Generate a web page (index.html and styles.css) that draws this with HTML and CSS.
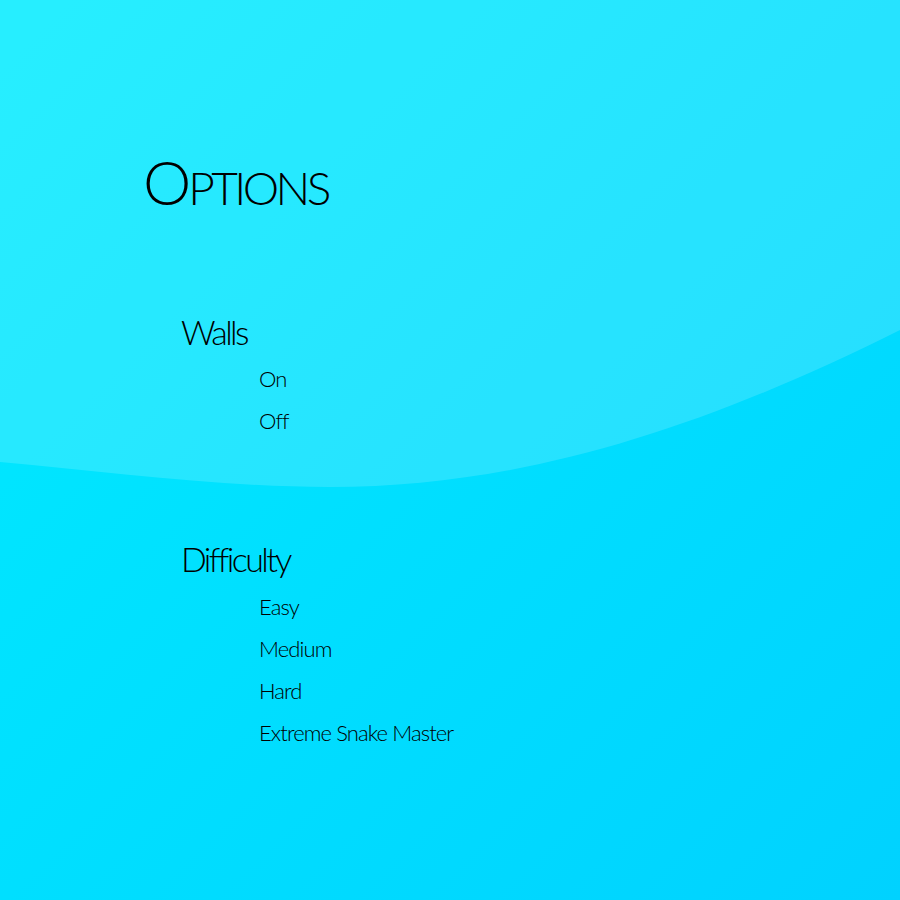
FILE: index.html
```html
<!DOCTYPE html>
<html lang="en">
<head>
<meta charset="utf-8">
<title>Options</title>
<link rel="stylesheet" href="styles.css">
</head>
<body>
<main class="screen">
  <svg class="glare" width="900" height="900" viewBox="0 0 900 900" aria-hidden="true">
    <path d="M0 0 L900 0 L900 330 C700 430 520 487 330 487 C220 487 110 472 0 462 Z" fill="rgba(255,255,255,0.15)"/>
  </svg>
  <div class="content">
    <h1 class="title"><span class="title-cap">O</span><span class="title-rest">ptions</span></h1>
    <section class="group group-walls">
      <h2 class="group-title">Walls</h2>
      <ul class="choices">
        <li class="choice">On</li>
        <li class="choice">Off</li>
      </ul>
    </section>
    <section class="group group-difficulty">
      <h2 class="group-title">Difficulty</h2>
      <ul class="choices">
        <li class="choice">Easy</li>
        <li class="choice">Medium</li>
        <li class="choice">Hard</li>
        <li class="choice">Extreme Snake Master</li>
      </ul>
    </section>
  </div>
</main>
</body>
</html>
```
FILE: styles.css
```css
html, body {
  margin: 0;
  padding: 0;
}
body {
  font-family: Lato, "Liberation Sans", sans-serif;
  font-weight: 300;
  color: #000;
}
.screen {
  position: relative;
  width: 900px;
  height: 900px;
  overflow: hidden;
  background: linear-gradient(135deg, #00ecff 0%, #00d2ff 100%);
}
.glare {
  position: absolute;
  left: 0;
  top: 0;
}
.content {
  position: relative;
  display: flex;
  flex-direction: column;
  padding: 152px 0 0 143px;
}
.title {
  margin: 0;
  font-weight: 300;
  line-height: 60px;
  display: flex;
  align-items: baseline;
}
.title-cap {
  font-size: 61px;
  letter-spacing: -3px;
}
.title-rest {
  font-size: 46px;
  letter-spacing: -3.6px;
  text-transform: uppercase;
}
.group {
  display: flex;
  flex-direction: column;
  padding-left: 38px;
}
.group-walls {
  margin-top: 94px;
}
.group-difficulty {
  margin-top: 97px;
}
.group-title {
  margin: 0;
  font-size: 34px;
  font-weight: 300;
  line-height: 40px;
  letter-spacing: -2.6px;
}
.choices {
  list-style: none;
  margin: 6px 0 0;
  padding: 0 0 0 78px;
  display: flex;
  flex-direction: column;
}
.group-difficulty .choices {
  margin-top: 7px;
}
.choice {
  font-size: 22px;
  line-height: 42px;
  letter-spacing: -0.9px;
}
```
